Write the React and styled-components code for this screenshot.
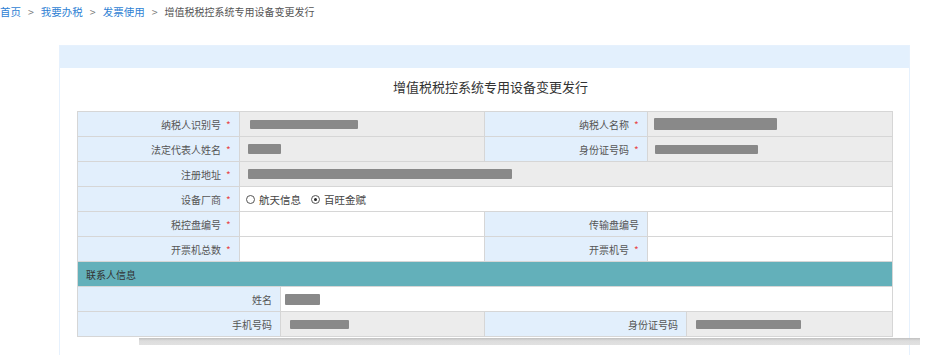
import React from 'react';
import styled, { createGlobalStyle } from 'styled-components';

const GlobalStyle = createGlobalStyle`
  html, body {
    margin: 0;
    padding: 0;
    background: #fff;
  }
  body {
    font-family: "Noto Sans CJK SC", "Noto Sans", sans-serif;
    font-size: 10px;
    color: #444;
  }
`;

const Page = styled.div`
  position: relative;
  width: 926px;
  height: 355px;
  overflow: hidden;
`;

const Crumbs = styled.div`
  display: flex;
  align-items: center;
  height: 24px;
  font-size: 10.5px;
  line-height: 24px;
  color: #555;
`;

const CrumbLink = styled.a`
  color: #2f7fd4;
  text-decoration: none;
`;

const Sep = styled.span`
  margin: 0 7px;
  color: #777;
`;

const Current = styled.span`
  font-size: 10px;
`;

const Panel = styled.div`
  margin: 21px 0 0 59px;
  width: 849px;
  height: 320px;
  border: 1px solid #e6f1fd;
  border-bottom: none;
`;

const PanelHead = styled.div`
  height: 22px;
  background: #e3f0fd;
`;

const Title = styled.h2`
  margin: 0;
  height: 37px;
  padding-bottom: 6px;
  display: flex;
  align-items: center;
  justify-content: center;
  padding-left: 12px;
  font-size: 13px;
  font-weight: normal;
  color: #333;
`;

const Table = styled.div`
  margin: 0 16px 0 17px;
  display: grid;
  grid-template-columns: ${p => p.$cols};
  border-top: ${p => (p.$open ? 'none' : '1px solid #d6d6d6')};
  border-left: 1px solid #d6d6d6;
`;

const Cell = styled.div`
  height: 24px;
  display: flex;
  align-items: center;
  border-right: 1px solid #d6d6d6;
  border-bottom: 1px solid #d6d6d6;
  grid-column: span ${p => p.$span || 1};
`;

const Label = styled(Cell)`
  justify-content: flex-end;
  padding-right: 8px;
  background: #e2effc;
  color: #555;
`;

const Value = styled(Cell)`
  padding-left: ${p => p.$pad ?? 8}px;
  background: ${p => (p.$filled ? '#ececec' : '#fff')};
`;

const Section = styled(Cell)`
  padding-left: 8px;
  background: #63b0ba;
  color: #333;
`;

const Star = styled.span`
  color: #e84545;
  margin-left: 5px;
  width: 5px;
`;

const Redact = styled.span`
  display: inline-block;
  width: ${p => p.$w}px;
  height: ${p => p.$h || 9}px;
  background: #898989;
  border-radius: 1px;
  filter: blur(0.3px);
`;

const RadioGroup = styled.div`
  display: flex;
  align-items: center;
  gap: 10px;
`;

const RadioItem = styled.label`
  display: flex;
  align-items: center;
  gap: 4px;
  font-size: 10.5px;
  color: #444;
`;

const RadioDot = styled.span`
  width: 7px;
  height: 7px;
  border: 1px solid #555;
  border-radius: 50%;
  display: flex;
  align-items: center;
  justify-content: center;
  &::after {
    content: '';
    width: 3px;
    height: 3px;
    border-radius: 50%;
    background: ${p => (p.$on ? '#222' : 'transparent')};
  }
`;

const ScrollShade = styled.div`
  position: absolute;
  left: 139px;
  top: 338px;
  width: 781px;
  height: 7px;
  background: linear-gradient(#b9b9b9, #d9d9d9 40%, #dedede);
  opacity: 0.9;
`;

function Req({ children }) {
  return (
    <>
      {children}
      <Star>*</Star>
    </>
  );
}

export default function App() {
  return (
    <Page>
      <GlobalStyle />
      <Crumbs>
        <CrumbLink href="#">首页</CrumbLink>
        <Sep>&gt;</Sep>
        <CrumbLink href="#">我要办税</CrumbLink>
        <Sep>&gt;</Sep>
        <CrumbLink href="#">发票使用</CrumbLink>
        <Sep>&gt;</Sep>
        <Current>增值税税控系统专用设备变更发行</Current>
      </Crumbs>

      <Panel>
        <PanelHead />
        <Title>增值税税控系统专用设备变更发行</Title>

        <Table $cols="162px 245px 163px 1fr">
          <Label><Req>纳税人识别号</Req></Label>
          <Value $filled $pad={10}><Redact $w={108} /></Value>
          <Label><Req>纳税人名称</Req></Label>
          <Value $filled $pad={6}><Redact $w={123} $h={12} /></Value>

          <Label><Req>法定代表人姓名</Req></Label>
          <Value $filled><Redact $w={33} $h={10} /></Value>
          <Label><Req>身份证号码</Req></Label>
          <Value $filled $pad={7}><Redact $w={103} /></Value>

          <Label><Req>注册地址</Req></Label>
          <Value $filled $span={3}><Redact $w={264} $h={10} /></Value>

          <Label><Req>设备厂商</Req></Label>
          <Value $span={3} $pad={6}>
            <RadioGroup>
              <RadioItem><RadioDot />航天信息</RadioItem>
              <RadioItem><RadioDot $on />百旺金赋</RadioItem>
            </RadioGroup>
          </Value>

          <Label><Req>税控盘编号</Req></Label>
          <Value />
          <Label>传输盘编号</Label>
          <Value />

          <Label><Req>开票机总数</Req></Label>
          <Value />
          <Label><Req>开票机号</Req></Label>
          <Value />

          <Section $span={4}>联系人信息</Section>
        </Table>

        <Table $open $cols="203px 204px 202px 1fr">
          <Label>姓名</Label>
          <Value $span={3} $pad={4}><Redact $w={35} $h={11} /></Value>

          <Label>手机号码</Label>
          <Value $filled $pad={9}><Redact $w={59} /></Value>
          <Label>身份证号码</Label>
          <Value $filled $pad={9}><Redact $w={105} /></Value>
        </Table>
      </Panel>

      <ScrollShade />
    </Page>
  );
}
